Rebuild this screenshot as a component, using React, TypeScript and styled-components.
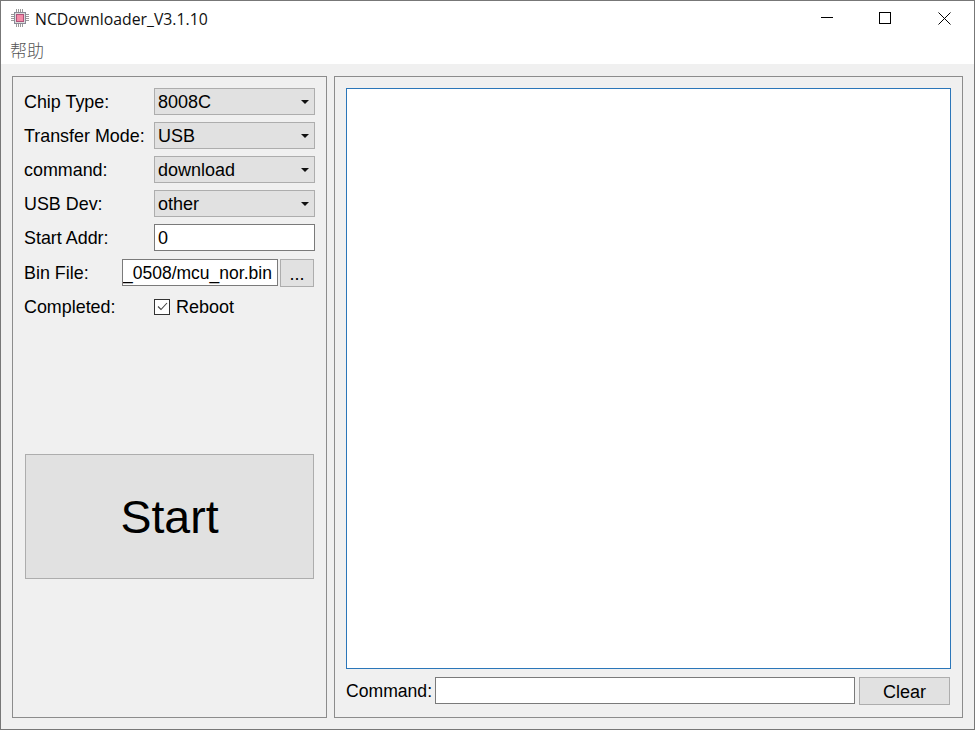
import React from "react";
import styled, { createGlobalStyle } from "styled-components";

const GlobalStyle = createGlobalStyle`
  html, body {
    margin: 0;
    padding: 0;
    background: #ffffff;
  }
  * {
    box-sizing: border-box;
  }
`;

const ChipIcon = () => (
  <svg width="20" height="20" viewBox="0 0 20 20">
    <g stroke="#9a9a9a" strokeWidth="1">
      <path d="M1 6.5h3M1 8.5h3M1 10.5h3M1 12.5h3M16 6.5h3M16 8.5h3M16 10.5h3M16 12.5h3" />
      <path d="M6.5 1v3M8.5 1v3M10.5 1v3M12.5 1v3M6.5 16v3M8.5 16v3M10.5 16v3M12.5 16v3" />
    </g>
    <rect x="4.5" y="4.5" width="11" height="11" fill="#dcdcdc" stroke="#8a8a96" />
    <rect x="6.5" y="6.5" width="7" height="7" fill="#f48ca8" stroke="#b0527a" />
  </svg>
);

const MinIcon = () => (
  <svg width="12" height="12" viewBox="0 0 12 12">
    <path d="M0 5.5h12" stroke="#000" fill="none" />
  </svg>
);

const MaxIcon = () => (
  <svg width="12" height="12" viewBox="0 0 12 12">
    <rect x="0.5" y="0.5" width="11" height="11" stroke="#000" fill="none" />
  </svg>
);

const CloseIcon = () => (
  <svg width="13" height="13" viewBox="0 0 13 13">
    <path d="M0.5 0.5l12 12M12.5 0.5l-12 12" stroke="#000" fill="none" />
  </svg>
);

const Arrow = () => (
  <svg width="8" height="4" viewBox="0 0 8 4">
    <path d="M0 0h8L4 4z" fill="#111" />
  </svg>
);

const combos = [
  { label: "Chip Type:", value: "8008C" },
  { label: "Transfer Mode:", value: "USB" },
  { label: "command:", value: "download" },
  { label: "USB Dev:", value: "other" },
];

export default function App() {
  return (
    <>
      <GlobalStyle />
      <Window>
        <TitleBar>
          <TitleLeft>
            <ChipIcon />
            <Title>NCDownloader_V3.1.10</Title>
          </TitleLeft>
          <Controls>
            <ControlBtn>
              <MinIcon />
            </ControlBtn>
            <ControlBtn $nudge>
              <MaxIcon />
            </ControlBtn>
            <ControlBtn>
              <CloseIcon />
            </ControlBtn>
          </Controls>
        </TitleBar>
        <MenuBar>
          <MenuItem>帮助</MenuItem>
        </MenuBar>
        <Body>
          <LeftPanel>
            <Form>
              {combos.map((c) => (
                <Row key={c.label}>
                  <Label>{c.label}</Label>
                  <Combo>
                    <ComboText>{c.value}</ComboText>
                    <Arrow />
                  </Combo>
                </Row>
              ))}
              <Row>
                <Label>Start Addr:</Label>
                <TextInput readOnly value="0" />
              </Row>
              <Row $lower>
                <Label>Bin File:</Label>
                <FileInput readOnly value="_0508/mcu_nor.bin" />
                <BrowseBtn>...</BrowseBtn>
              </Row>
              <Row>
                <Label>Completed:</Label>
                <CheckWrap>
                  <CheckBox>
                    <svg width="11" height="9" viewBox="0 0 11 9">
                      <path d="M1 4.5l3 3L10 1" stroke="#444" strokeWidth="1.1" fill="none" />
                    </svg>
                  </CheckBox>
                  <ComboText>Reboot</ComboText>
                </CheckWrap>
              </Row>
            </Form>
            <StartBtn>Start</StartBtn>
          </LeftPanel>
          <RightPanel>
            <LogArea />
            <CommandRow>
              <CommandLabel>Command:</CommandLabel>
              <CommandInput readOnly value="" />
              <ClearBtn>Clear</ClearBtn>
            </CommandRow>
          </RightPanel>
        </Body>
      </Window>
    </>
  );
}

const Window = styled.div`
  width: 975px;
  height: 730px;
  border: 1px solid #777777;
  display: flex;
  flex-direction: column;
  background: #ffffff;
  font-family: "Liberation Sans", Arial, sans-serif;
  font-size: 18px;
  color: #000;
`;
const TitleBar = styled.div`
  height: 34px;
  display: flex;
  align-items: center;
  justify-content: space-between;
`;
const TitleLeft = styled.div`
  display: flex;
  align-items: center;
  gap: 5px;
  padding-left: 9px;
`;
const Title = styled.span`
  font-family: "Open Sans", sans-serif;
  font-size: 15.8px;
  color: #111;
  padding-top: 1px;
`;
const Controls = styled.div`
  display: flex;
`;
const ControlBtn = styled.div<{ $nudge?: boolean }>`
  width: 59px;
  height: 34px;
  padding-right: ${(props) => (props.$nudge ? "2px" : "0")};
  display: flex;
  align-items: center;
  justify-content: center;
`;
const MenuBar = styled.div`
  height: 29px;
  display: flex;
  align-items: center;
  padding-left: 9px;
`;
const MenuItem = styled.span`
  font-family: "Noto Sans CJK SC", sans-serif;
  font-size: 17px;
  font-weight: 300;
  color: #555;
`;
const Body = styled.div`
  flex: 1;
  min-height: 0;
  display: flex;
  gap: 7px;
  padding: 12px 11px 11px;
  background: #f0f0f0;
`;
const LeftPanel = styled.div`
  width: 315px;
  flex: none;
  border: 1px solid #8c8c8c;
  padding: 11px 11px 0;
  display: flex;
  flex-direction: column;
`;
const Form = styled.div`
  display: flex;
  flex-direction: column;
  gap: 7px;
`;
const Row = styled.div<{ $lower?: boolean }>`
  height: 27px;
  margin-top: ${(props) => (props.$lower ? "1px" : "0")};
  display: flex;
  align-items: center;
`;
const Label = styled.label`
  flex: none;
  width: 130px;
  padding-top: 2px;
  font-size: 17.9px;
  white-space: nowrap;
`;
const Combo = styled.div`
  width: 161px;
  height: 27px;
  background: #e1e1e1;
  border: 1px solid #adadad;
  padding: 0 5px 0 3px;
  display: flex;
  align-items: center;
  justify-content: space-between;
`;
const ComboText = styled.span`
  padding-top: 2px;
`;
const TextInput = styled.input`
  width: 161px;
  height: 27px;
  border: 1px solid #7a7a7a;
  background: #fff;
  padding: 2px 3px 0;
  font: inherit;
  outline: none;
`;
const FileInput = styled(TextInput)`
  width: 156px;
  margin-left: -32px;
  padding: 2px 0 0 0;
  font-size: 17.5px;
`;
const BrowseBtn = styled.div`
  width: 34px;
  height: 28px;
  align-self: flex-start;
  margin-left: 2px;
  padding-top: 3px;
  background: #e1e1e1;
  border: 1px solid #adadad;
  display: flex;
  align-items: center;
  justify-content: center;
`;
const CheckWrap = styled.div`
  display: flex;
  align-items: center;
  gap: 6px;
`;
const CheckBox = styled.div`
  width: 16px;
  height: 16px;
  background: #fff;
  border: 1px solid #333;
  display: flex;
  align-items: center;
  justify-content: center;
`;
const StartBtn = styled.div`
  width: 289px;
  height: 125px;
  margin-top: 134px;
  margin-left: 1px;
  background: #e1e1e1;
  border: 1px solid #adadad;
  display: flex;
  align-items: center;
  justify-content: center;
  font-size: 46.5px;
`;
const RightPanel = styled.div`
  flex: 1;
  min-width: 0;
  border: 1px solid #8c8c8c;
  padding: 11px 11px 0;
  display: flex;
  flex-direction: column;
`;
const LogArea = styled.div`
  height: 581px;
  background: #fff;
  border: 1px solid #2b76b9;
`;
const CommandRow = styled.div`
  margin-top: 8px;
  height: 28px;
  display: flex;
  align-items: flex-start;
`;
const CommandLabel = styled.span`
  width: 86px;
  font-size: 17.6px;
  line-height: 28px;
  white-space: nowrap;
`;
const CommandInput = styled.input`
  width: 420px;
  height: 27px;
  margin-left: 3px;
  border: 1px solid #7a7a7a;
  background: #fff;
  font: inherit;
  outline: none;
`;
const ClearBtn = styled.div`
  width: 91px;
  height: 28px;
  margin-left: 4px;
  padding-top: 2px;
  background: #e1e1e1;
  border: 1px solid #adadad;
  display: flex;
  align-items: center;
  justify-content: center;
`;
